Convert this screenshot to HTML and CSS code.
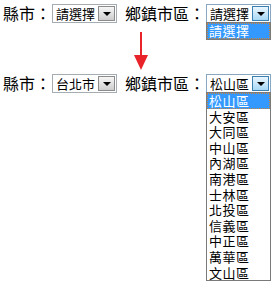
FILE: index.html
```html
<!DOCTYPE html>
<html lang="zh-Hant">
<head>
  <meta charset="UTF-8">
  <title>縣市鄉鎮選單</title>
  <link rel="stylesheet" href="styles.css">
</head>
<body>
  <div class="page">
    <div class="row">
      <span class="label">縣市：</span>
      <div class="select">
        <span class="value">請選擇</span>
        <span class="btn"></span>
      </div>
      <span class="label label-town">鄉鎮市區：</span>
      <div class="select open">
        <span class="value">請選擇</span>
        <span class="btn"></span>
        <ul class="list">
          <li class="selected">請選擇</li>
        </ul>
      </div>
    </div>

    <div class="arrow">
      <div class="shaft"></div>
      <div class="head"></div>
    </div>

    <div class="row">
      <span class="label">縣市：</span>
      <div class="select">
        <span class="value">台北市</span>
        <span class="btn"></span>
      </div>
      <span class="label label-town">鄉鎮市區：</span>
      <div class="select open">
        <span class="value">松山區</span>
        <span class="btn"></span>
        <ul class="list">
          <li class="selected">松山區</li>
          <li>大安區</li>
          <li>大同區</li>
          <li>中山區</li>
          <li>內湖區</li>
          <li>南港區</li>
          <li>士林區</li>
          <li>北投區</li>
          <li>信義區</li>
          <li>中正區</li>
          <li>萬華區</li>
          <li>文山區</li>
        </ul>
      </div>
    </div>
  </div>
</body>
</html>
```

FILE: styles.css
```css
html, body {
  margin: 0;
  background: white;
}

body {
  font-family: "Noto Sans CJK TC", "Noto Sans", sans-serif;
  color: #000;
}

.page {
  min-height: 289px;
  box-sizing: border-box;
  padding: 4px 0 0 3px;
}

.row {
  display: flex;
  align-items: center;
  height: 19px;
}

.label {
  font-size: 16px;
  line-height: 19px;
  width: 49px;
}

.label-town {
  width: 81px;
  margin-left: 8px;
}

.select {
  position: relative;
  display: flex;
  align-items: center;
  width: 65px;
  height: 19px;
  box-sizing: border-box;
  border: 1px solid #a5acb2;
  background: white;
  font-size: 13px;
}

.value {
  padding-left: 3px;
  line-height: 17px;
}

.btn {
  position: relative;
  margin: 0 1px 0 auto;
  width: 17px;
  height: 15px;
  box-sizing: border-box;
  border: 1px solid #8c8c8c;
  background: linear-gradient(#f6f6f6, #cdcdcd);
}

.btn::after {
  content: "";
  position: absolute;
  left: 4px;
  top: 5px;
  border-left: 4px solid transparent;
  border-right: 4px solid transparent;
  border-top: 4px solid #000;
}

.open {
  border-color: #8aa7c2;
}

.open .btn {
  border-color: #3c7fb1;
  background: linear-gradient(#eaf6fd, #a7d8f5);
}

.list {
  position: absolute;
  top: 17px;
  left: -1px;
  width: 65px;
  box-sizing: border-box;
  margin: 0;
  padding: 0;
  list-style: none;
  border: 1px solid #7a7a7a;
  background: white;
  z-index: 1;
}

.list li {
  height: 15.6px;
  line-height: 15.6px;
  padding-left: 2px;
  font-size: 13px;
  letter-spacing: 0.5px;
}

.list li.selected {
  background: #3399ff;
  color: white;
  outline: 1px dotted #c9803a;
  outline-offset: -1px;
}

.arrow {
  margin: 9px 0 4px 131px;
  width: 14px;
}

.shaft {
  width: 2px;
  height: 23px;
  margin: 0 auto;
  background: #e8232a;
}

.head {
  width: 0;
  height: 0;
  border-left: 7px solid transparent;
  border-right: 7px solid transparent;
  border-top: 15px solid #e8232a;
}
```
